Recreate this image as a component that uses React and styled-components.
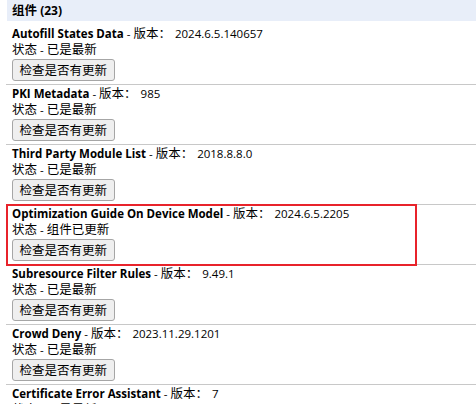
import styled, { createGlobalStyle } from "styled-components";

const GlobalStyle = createGlobalStyle`
  body {
    margin: 0;
    background: #ffffff;
    font-family: "Open Sans", "Noto Sans CJK SC", sans-serif;
    font-size: 11.5px;
    color: #000000;
  }
`;

const Page = styled.div`
  padding-left: 7px;
  width: 469px;
  height: 404px;
  overflow: hidden;
`;

const SectionHeader = styled.div`
  height: 21px;
  line-height: 21px;
  padding-left: 5px;
  margin-bottom: 4px;
  background: #e8eef9;
  font-weight: bold;
  font-size: 12px;
`;

const List = styled.div`
  margin-left: -1px;
`;

// 구성요소 한 줄 (이름, 상태, 버튼)
const Row = styled.div`
  position: relative;
  padding: 1px 0 3px 6px;
  border-bottom: 1px solid #c8c8c8;

  ${({ $highlight }) =>
    $highlight &&
    `
    &::after {
      content: "";
      position: absolute;
      left: 0;
      top: -1px;
      width: 411px;
      height: 62px;
      border: 2px solid #e8232b;
      box-sizing: border-box;
      pointer-events: none;
    }
  `}
`;

const Line = styled.div`
  height: 16px;
  line-height: 16px;
  white-space: nowrap;
`;

const Name = styled.span`
  font-weight: bold;
`;

// 한자 부분은 조금 더 크게
const Cjk = styled.span`
  font-family: "Noto Sans CJK SC", sans-serif;
  font-size: 12.5px;
  line-height: 1;
`;

const Version = styled.span`
  margin-left: 4px;
`;

const CheckButton = styled.button`
  display: block;
  margin-top: 1px;
  height: 22px;
  padding: 0 6.5px;
  font-family: "Noto Sans CJK SC", sans-serif;
  font-size: 12.5px;
  line-height: 18px;
  color: #000000;
  background: #efefef;
  border: 1px solid #a6a6a6;
  border-radius: 3px;
`;

const components = [
  { name: "Autofill States Data", version: "2024.6.5.140657", status: "已是最新" },
  { name: "PKI Metadata", version: "985", status: "已是最新" },
  { name: "Third Party Module List", version: "2018.8.8.0", status: "已是最新" },
  {
    name: "Optimization Guide On Device Model",
    version: "2024.6.5.2205",
    status: "组件已更新",
    highlight: true,
  },
  { name: "Subresource Filter Rules", version: "9.49.1", status: "已是最新" },
  { name: "Crowd Deny", version: "2023.11.29.1201", status: "已是最新" },
  { name: "Certificate Error Assistant", version: "7", status: "已是最新" },
];

export default function App() {
  return (
    <>
      <GlobalStyle />
      <Page>
        <SectionHeader>
          <Cjk>组件</Cjk> (23)
        </SectionHeader>
        <List>
          {components.map((c) => (
            <Row key={c.name} $highlight={c.highlight}>
              <Line>
                <Name>{c.name}</Name> - <Cjk>版本：</Cjk>
                <Version>{c.version}</Version>
              </Line>
              <Line>
                <Cjk>状态</Cjk> - <Cjk>{c.status}</Cjk>
              </Line>
              <CheckButton>检查是否有更新</CheckButton>
            </Row>
          ))}
        </List>
      </Page>
    </>
  );
}
